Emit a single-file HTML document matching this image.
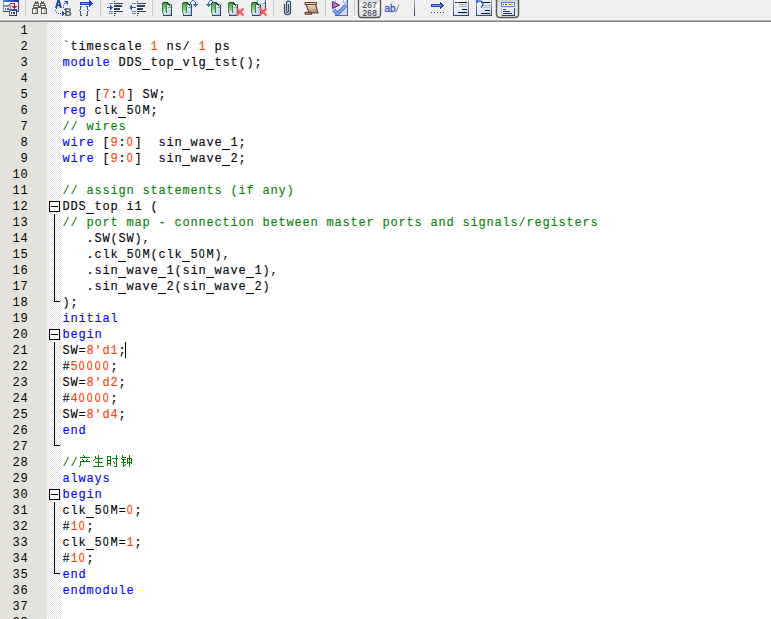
<!DOCTYPE html>
<html><head><meta charset="utf-8">
<style>
html,body{margin:0;padding:0;}
body{width:771px;height:619px;overflow:hidden;background:#fff;position:relative;font-family:"Liberation Mono",monospace;}
#tb{position:absolute;left:0;top:0;width:771px;height:19px;background:#f0f0f0;}
#tbb1{position:absolute;left:0;top:19px;width:771px;height:1px;background:#f4f4f4;}
#tbb2{position:absolute;left:0;top:20px;width:771px;height:1px;background:#b2b4b7;}
#tbb3{position:absolute;left:0;top:21px;width:771px;height:1px;background:#7f858f;}
#gut{position:absolute;left:0;top:22px;width:47px;height:597px;background:#e3e3dc;}
#chk{position:absolute;left:47px;top:22px;width:14px;height:597px;}
#nums{position:absolute;left:0;top:23px;width:28.4px;text-align:right;font-size:12px;letter-spacing:0.8px;line-height:16px;color:#000;white-space:pre;}
#code{position:absolute;left:62.4px;top:23px;font-size:12px;letter-spacing:0.8px;-webkit-text-stroke:0.1px;line-height:16px;color:#000;white-space:pre;margin:0;font-family:"Liberation Mono",monospace;}
.u{display:inline-block;width:8px;height:1px;background:currentColor;position:relative;top:4px;left:-0.4px}.z{display:inline-block;transform:scaleX(0.82)}.k{color:#0000ff}.c{color:#008000}.n{color:#ff4000}
#fold{position:absolute;left:0;top:0;}
</style></head><body>
<div id="tb"></div><svg id="tbsvg" width="771" height="19" shape-rendering="crispEdges" style="position:absolute;left:0;top:0"><defs>
<linearGradient id="gBlue" x1="0" y1="0" x2="1" y2="0"><stop offset="0" stop-color="#4a80e0"/><stop offset="1" stop-color="#1a2a98"/></linearGradient>
<linearGradient id="gWin" x1="0" y1="0" x2="1" y2="1"><stop offset="0" stop-color="#ffffff"/><stop offset="1" stop-color="#d4e2fa"/></linearGradient>
<linearGradient id="gPage" x1="0" y1="0" x2="1" y2="1"><stop offset="0" stop-color="#f4f8ff"/><stop offset="1" stop-color="#b8ccf0"/></linearGradient>
<linearGradient id="gGreen" x1="0" y1="0" x2="0" y2="1"><stop offset="0" stop-color="#4a9a4a"/><stop offset="1" stop-color="#b0ecb0"/></linearGradient>
<linearGradient id="gScroll" x1="0" y1="0" x2="0" y2="1"><stop offset="0" stop-color="#efe4c0"/><stop offset="1" stop-color="#9c8c78"/></linearGradient>
<linearGradient id="gBtn" x1="0" y1="0" x2="0" y2="1"><stop offset="0" stop-color="#d4d4d4"/><stop offset="0.3" stop-color="#f6f6f6"/><stop offset="1" stop-color="#e4e4e4"/></linearGradient>
<linearGradient id="gBtn2" x1="0" y1="0" x2="0" y2="1"><stop offset="0" stop-color="#c8c8c8"/><stop offset="0.25" stop-color="#e6e6e6"/><stop offset="1" stop-color="#ececec"/></linearGradient>
<linearGradient id="gVl" x1="0" y1="0" x2="0" y2="1"><stop offset="0" stop-color="#a8b4c8"/><stop offset="1" stop-color="#2a3a58"/></linearGradient>
<linearGradient id="gDocB" x1="0" y1="0" x2="0" y2="1"><stop offset="0" stop-color="#90a4c0"/><stop offset="1" stop-color="#34486a"/></linearGradient>
<linearGradient id="gDocF" x1="0" y1="0" x2="1" y2="1"><stop offset="0" stop-color="#ffffff"/><stop offset="1" stop-color="#c8d6f6"/></linearGradient>
</defs><rect x="3" y="0" width="16" height="2" fill="url(#gBlue)"/><rect x="3" y="2" width="1" height="10" fill="#8494b4"/><rect x="18" y="2" width="1" height="10" fill="#3a4a6a"/><rect x="3" y="11" width="16" height="1" fill="#3a4a6a"/><rect x="4" y="2" width="14" height="9" fill="url(#gWin)"/><rect x="4" y="5" width="7" height="2" fill="#8c948c"/><rect x="10" y="5" width="1" height="5" fill="#8c948c"/><rect x="5" y="8" width="1" height="2" fill="#606860"/><rect x="7" y="8" width="2" height="2" fill="#606860"/><rect x="9" y="4" width="1" height="1" fill="#d8104a"/><rect x="10" y="3" width="4" height="1" fill="#d8104a"/><rect x="14" y="3" width="1" height="6" fill="#d8104a"/><rect x="12" y="6" width="5" height="1" fill="#d8104a"/><rect x="13" y="7" width="3" height="1" fill="#d8104a"/><rect x="14" y="8" width="1" height="1" fill="#d8104a"/><rect x="9" y="9" width="8" height="2" fill="url(#gBlue)"/><rect x="9" y="11" width="1" height="4" fill="#5a6a8a"/><rect x="16" y="11" width="1" height="4" fill="#304060"/><rect x="9" y="15" width="8" height="1" fill="#304060"/><rect x="10" y="11" width="6" height="4" fill="#fbfcff"/><rect x="11" y="12" width="1" height="2" fill="#203050"/><rect x="13" y="12" width="2" height="2" fill="#203050"/><rect x="25" y="0" width="1" height="16" fill="#cbcbcb"/><rect x="35" y="1" width="3" height="2" fill="#5e5a54"/><rect x="36" y="1" width="1" height="1" fill="#fbfbf8"/><rect x="34" y="3" width="5" height="2" fill="#5e5a54"/><rect x="35" y="4" width="3" height="1" fill="#fbfbf8"/><rect x="33" y="5" width="6" height="3" fill="#5e5a54"/><rect x="34" y="6" width="4" height="1" fill="#fbfbf8"/><rect x="32" y="8" width="6" height="6" fill="#5e5a54"/><rect x="33" y="9" width="4" height="4" fill="#c8c6c0"/><rect x="33" y="9" width="2" height="4" fill="#fbfbf8"/><rect x="41" y="1" width="3" height="2" fill="#5e5a54"/><rect x="42" y="1" width="1" height="1" fill="#fbfbf8"/><rect x="40" y="3" width="5" height="2" fill="#5e5a54"/><rect x="41" y="4" width="3" height="1" fill="#fbfbf8"/><rect x="40" y="5" width="6" height="3" fill="#5e5a54"/><rect x="41" y="6" width="4" height="1" fill="#fbfbf8"/><rect x="41" y="8" width="6" height="6" fill="#5e5a54"/><rect x="42" y="9" width="4" height="4" fill="#c8c6c0"/><rect x="42" y="9" width="2" height="4" fill="#fbfbf8"/><rect x="39" y="6" width="1" height="2" fill="#5e5a54"/><path d="M55 8 L57.3 0 L59.7 0 L62 8 L60 8 L59.5 6.2 L57.5 6.2 L57 8 Z M57.9 4.6 L59.1 4.6 L58.5 2.2 Z" fill="#1848a8" fill-rule="evenodd" shape-rendering="auto"/><rect x="56" y="8" width="1" height="1" fill="#2848c0"/><rect x="55" y="10" width="1" height="1" fill="#2848c0"/><rect x="56" y="12" width="1" height="1" fill="#2848c0"/><rect x="58" y="13" width="1" height="1" fill="#2848c0"/><rect x="60" y="13" width="1" height="1" fill="#2848c0"/><rect x="64" y="9" width="1" height="1" fill="#2848c0"/><rect x="63" y="7" width="1" height="1" fill="#2848c0"/><rect x="63" y="5" width="1" height="1" fill="#2848c0"/><rect x="64" y="3" width="1" height="1" fill="#2848c0"/><rect x="62" y="11" width="1" height="5" fill="#2848c0"/><rect x="63" y="12" width="1" height="3" fill="#2848c0"/><rect x="64" y="13" width="1" height="1" fill="#2848c0"/><path d="M64 1 L68 1 L68 5 Z" fill="#2848c0" shape-rendering="auto"/><path d="M65 8 L69 8 Q71 8 71 10 Q71 11.3 70 11.6 Q71.5 12 71.5 13.5 Q71.5 16 69 16 L65 16 Z M67 9.6 L67 11 L68.6 11 Q69.2 11 69.2 10.3 Q69.2 9.6 68.6 9.6 Z M67 12.4 L67 14.4 L68.8 14.4 Q69.6 14.4 69.6 13.4 Q69.6 12.4 68.8 12.4 Z" fill="#687070" fill-rule="evenodd" shape-rendering="auto"/><rect x="80" y="2" width="10" height="3" fill="#2040c0"/><rect x="81" y="3" width="8" height="1" fill="#7aa0e8"/><rect x="89" y="0" width="1" height="7" fill="#2040c0"/><rect x="90" y="1" width="1" height="5" fill="#2040c0"/><rect x="91" y="2" width="1" height="3" fill="#2040c0"/><rect x="92" y="3" width="1" height="1" fill="#2040c0"/><rect x="80" y="6" width="2" height="1" fill="#48607a"/><rect x="80" y="7" width="1" height="3" fill="#48607a"/><rect x="79" y="10" width="1" height="1" fill="#48607a"/><rect x="80" y="11" width="1" height="4" fill="#48607a"/><rect x="80" y="15" width="2" height="1" fill="#48607a"/><rect x="86" y="6" width="2" height="1" fill="#48607a"/><rect x="87" y="7" width="1" height="3" fill="#48607a"/><rect x="88" y="10" width="1" height="1" fill="#48607a"/><rect x="87" y="11" width="1" height="4" fill="#48607a"/><rect x="86" y="15" width="2" height="1" fill="#48607a"/><rect x="100" y="0" width="1" height="16" fill="#cbcbcb"/><rect x="114" y="1" width="1" height="1" fill="#2a4464"/><rect x="114" y="15" width="1" height="1" fill="#2a4464"/><rect x="109" y="3" width="4" height="1" fill="#7088a8"/><rect x="114" y="3" width="9" height="1" fill="#2a4464"/><rect x="114" y="5" width="8" height="2" fill="#2a4464"/><rect x="114" y="8" width="6" height="2" fill="#2a4464"/><rect x="109" y="11" width="4" height="1" fill="#7088a8"/><rect x="114" y="11" width="9" height="1" fill="#2a4464"/><rect x="109" y="13" width="4" height="1" fill="#7088a8"/><rect x="114" y="13" width="2" height="1" fill="#2a4464"/><rect x="107" y="7" width="6" height="1" fill="#3050d0"/><rect x="110" y="5" width="1" height="5" fill="#3050d0"/><rect x="111" y="6" width="1" height="3" fill="#3050d0"/><rect x="137" y="1" width="1" height="1" fill="#2a4464"/><rect x="137" y="15" width="1" height="1" fill="#2a4464"/><rect x="132" y="3" width="4" height="1" fill="#7088a8"/><rect x="137" y="3" width="9" height="1" fill="#2a4464"/><rect x="137" y="5" width="8" height="2" fill="#2a4464"/><rect x="137" y="8" width="6" height="2" fill="#2a4464"/><rect x="132" y="11" width="4" height="1" fill="#7088a8"/><rect x="137" y="11" width="9" height="1" fill="#2a4464"/><rect x="132" y="13" width="4" height="1" fill="#7088a8"/><rect x="137" y="13" width="2" height="1" fill="#2a4464"/><rect x="130" y="7" width="6" height="1" fill="#3050d0"/><rect x="131" y="5" width="1" height="5" fill="#3050d0"/><rect x="130" y="6" width="1" height="3" fill="#3050d0"/><rect x="152" y="0" width="1" height="16" fill="#cbcbcb"/><rect x="163" y="4" width="9" height="12" fill="#6a80a0"/><rect x="164" y="5" width="7" height="10" fill="url(#gPage)"/><rect x="163" y="15" width="9" height="1" fill="#2a4060"/><rect x="171" y="5" width="1" height="11" fill="#34486a"/><rect x="168" y="5" width="2" height="2" fill="#ffffff"/><rect x="168" y="7" width="3" height="1" fill="#8aa0c0"/><rect x="170" y="6" width="1" height="1" fill="#8aa0c0"/><rect x="162" y="3" width="5" height="10" fill="url(#gGreen)"/><rect x="164" y="11" width="1" height="2" fill="#d8e4f4"/><rect x="163" y="12" width="1" height="1" fill="#d8e4f4"/><rect x="165" y="12" width="1" height="1" fill="#d8e4f4"/><rect x="163" y="2" width="5" height="1" fill="#0e520e"/><rect x="162" y="3" width="1" height="1" fill="#0e520e"/><rect x="167" y="3" width="2" height="1" fill="#0e520e"/><rect x="168" y="4" width="2" height="1" fill="#0e520e"/><rect x="169" y="5" width="1" height="1" fill="#0e520e"/><rect x="162" y="4" width="1" height="9" fill="#3a8a3a"/><rect x="166" y="4" width="1" height="9" fill="#3a823a"/><rect x="183" y="4" width="9" height="12" fill="#6a80a0"/><rect x="184" y="5" width="7" height="10" fill="url(#gPage)"/><rect x="183" y="15" width="9" height="1" fill="#2a4060"/><rect x="191" y="5" width="1" height="11" fill="#34486a"/><rect x="188" y="5" width="2" height="2" fill="#ffffff"/><rect x="188" y="7" width="3" height="1" fill="#8aa0c0"/><rect x="190" y="6" width="1" height="1" fill="#8aa0c0"/><rect x="182" y="3" width="5" height="10" fill="url(#gGreen)"/><rect x="184" y="11" width="1" height="2" fill="#d8e4f4"/><rect x="183" y="12" width="1" height="1" fill="#d8e4f4"/><rect x="185" y="12" width="1" height="1" fill="#d8e4f4"/><rect x="183" y="2" width="5" height="1" fill="#0e520e"/><rect x="182" y="3" width="1" height="1" fill="#0e520e"/><rect x="187" y="3" width="2" height="1" fill="#0e520e"/><rect x="188" y="4" width="2" height="1" fill="#0e520e"/><rect x="189" y="5" width="1" height="1" fill="#0e520e"/><rect x="182" y="4" width="1" height="9" fill="#3a8a3a"/><rect x="186" y="4" width="1" height="9" fill="#3a823a"/><rect x="190" y="2" width="1" height="2" fill="#3a6ad8"/><rect x="191" y="1" width="1" height="1" fill="#3a6ad8"/><rect x="192" y="0" width="2" height="1" fill="#3a6ad8"/><rect x="194" y="1" width="1" height="1" fill="#3a6ad8"/><rect x="195" y="2" width="1" height="4" fill="#3a6ad8"/><rect x="193" y="4" width="5" height="1" fill="#3a6ad8"/><rect x="194" y="5" width="3" height="1" fill="#3a6ad8"/><rect x="195" y="6" width="1" height="1" fill="#3a6ad8"/><rect x="212" y="4" width="9" height="12" fill="#6a80a0"/><rect x="213" y="5" width="7" height="10" fill="url(#gPage)"/><rect x="212" y="15" width="9" height="1" fill="#2a4060"/><rect x="220" y="5" width="1" height="11" fill="#34486a"/><rect x="217" y="5" width="2" height="2" fill="#ffffff"/><rect x="217" y="7" width="3" height="1" fill="#8aa0c0"/><rect x="219" y="6" width="1" height="1" fill="#8aa0c0"/><rect x="211" y="3" width="5" height="10" fill="url(#gGreen)"/><rect x="213" y="11" width="1" height="2" fill="#d8e4f4"/><rect x="212" y="12" width="1" height="1" fill="#d8e4f4"/><rect x="214" y="12" width="1" height="1" fill="#d8e4f4"/><rect x="212" y="2" width="5" height="1" fill="#0e520e"/><rect x="211" y="3" width="1" height="1" fill="#0e520e"/><rect x="216" y="3" width="2" height="1" fill="#0e520e"/><rect x="217" y="4" width="2" height="1" fill="#0e520e"/><rect x="218" y="5" width="1" height="1" fill="#0e520e"/><rect x="211" y="4" width="1" height="9" fill="#3a8a3a"/><rect x="215" y="4" width="1" height="9" fill="#3a823a"/><rect x="213" y="2" width="1" height="2" fill="#3a6ad8"/><rect x="212" y="1" width="1" height="1" fill="#3a6ad8"/><rect x="210" y="0" width="2" height="1" fill="#3a6ad8"/><rect x="209" y="1" width="1" height="1" fill="#3a6ad8"/><rect x="208" y="2" width="1" height="4" fill="#3a6ad8"/><rect x="206" y="4" width="5" height="1" fill="#3a6ad8"/><rect x="207" y="5" width="3" height="1" fill="#3a6ad8"/><rect x="208" y="6" width="1" height="1" fill="#3a6ad8"/><rect x="229" y="4" width="9" height="12" fill="#6a80a0"/><rect x="230" y="5" width="7" height="10" fill="url(#gPage)"/><rect x="229" y="15" width="9" height="1" fill="#2a4060"/><rect x="237" y="5" width="1" height="11" fill="#34486a"/><rect x="234" y="5" width="2" height="2" fill="#ffffff"/><rect x="234" y="7" width="3" height="1" fill="#8aa0c0"/><rect x="236" y="6" width="1" height="1" fill="#8aa0c0"/><rect x="228" y="3" width="5" height="10" fill="url(#gGreen)"/><rect x="230" y="11" width="1" height="2" fill="#d8e4f4"/><rect x="229" y="12" width="1" height="1" fill="#d8e4f4"/><rect x="231" y="12" width="1" height="1" fill="#d8e4f4"/><rect x="229" y="2" width="5" height="1" fill="#0e520e"/><rect x="228" y="3" width="1" height="1" fill="#0e520e"/><rect x="233" y="3" width="2" height="1" fill="#0e520e"/><rect x="234" y="4" width="2" height="1" fill="#0e520e"/><rect x="235" y="5" width="1" height="1" fill="#0e520e"/><rect x="228" y="4" width="1" height="9" fill="#3a8a3a"/><rect x="232" y="4" width="1" height="9" fill="#3a823a"/><path d="M236.5 8.5 L243.5 15.5 M243.5 8.5 L236.5 15.5" stroke="#ff5858" stroke-width="2.3" shape-rendering="auto"/><rect x="257" y="0" width="9" height="11" fill="#7a90b0"/><rect x="258" y="0" width="7" height="10" fill="url(#gPage)"/><rect x="265" y="2" width="1" height="9" fill="#3a5070"/><rect x="262" y="1" width="2" height="2" fill="#ffffff"/><rect x="262" y="3" width="3" height="1" fill="#8aa0c0"/><rect x="264" y="2" width="1" height="1" fill="#8aa0c0"/><rect x="252" y="4" width="9" height="12" fill="#6a80a0"/><rect x="253" y="5" width="7" height="10" fill="url(#gPage)"/><rect x="252" y="15" width="9" height="1" fill="#2a4060"/><rect x="260" y="5" width="1" height="11" fill="#34486a"/><rect x="257" y="5" width="2" height="2" fill="#ffffff"/><rect x="257" y="7" width="3" height="1" fill="#8aa0c0"/><rect x="259" y="6" width="1" height="1" fill="#8aa0c0"/><rect x="251" y="3" width="5" height="10" fill="url(#gGreen)"/><rect x="253" y="11" width="1" height="2" fill="#d8e4f4"/><rect x="252" y="12" width="1" height="1" fill="#d8e4f4"/><rect x="254" y="12" width="1" height="1" fill="#d8e4f4"/><rect x="252" y="2" width="5" height="1" fill="#0e520e"/><rect x="251" y="3" width="1" height="1" fill="#0e520e"/><rect x="256" y="3" width="2" height="1" fill="#0e520e"/><rect x="257" y="4" width="2" height="1" fill="#0e520e"/><rect x="258" y="5" width="1" height="1" fill="#0e520e"/><rect x="251" y="4" width="1" height="9" fill="#3a8a3a"/><rect x="255" y="4" width="1" height="9" fill="#3a823a"/><path d="M259.5 8.5 L266.5 15.5 M266.5 8.5 L259.5 15.5" stroke="#ff5858" stroke-width="2.3" shape-rendering="auto"/><rect x="273" y="0" width="1" height="16" fill="#cbcbcb"/><path d="M288.5 4 L288.5 11 Q288.5 12.5 287.5 12.5 Q286.5 12.5 286.5 11 L286.5 3 Q286.5 1 288.5 1 Q290.5 1 290.5 3 L290.5 12 Q290.5 14.5 287.5 14.5 Q284.5 14.5 284.5 12 L284.5 4" fill="none" stroke="#2a4a72" stroke-width="1.25" shape-rendering="auto"/><path d="M306 4 L315.5 4 L318 13 L309 13 Z" fill="url(#gScroll)" stroke="#6e3828" stroke-width="1.1" shape-rendering="auto"/><path d="M305.5 2.5 L316 2.5 Q317.2 3.3 316 4.5 L305.5 4.5 Q304.3 3.5 305.5 2.5 Z" fill="#e8dcb8" stroke="#6e3828" stroke-width="1.1" shape-rendering="auto"/><path d="M305.5 12.2 L311 12.2 L311.5 14.3 L305.5 14.3 Q304.2 13.2 305.5 12.2 Z" fill="#b0a088" stroke="#6e3828" stroke-width="1.1" shape-rendering="auto"/><rect x="325" y="0" width="1" height="16" fill="#cbcbcb"/><rect x="335" y="0" width="13" height="16" fill="#5a6a84"/><rect x="336" y="0" width="11" height="15" fill="url(#gDocF)"/><rect x="343" y="0" width="4" height="3" fill="#a8b8d0"/><rect x="344" y="0" width="2" height="2" fill="#ffffff"/><rect x="335" y="0" width="1" height="15" fill="#b8c4d8"/><path d="M332.5 1.5 L339.5 5 L332.5 8.5 Z" fill="#c868d8" stroke="#403860" stroke-width="1" shape-rendering="auto"/><path d="M333.5 10 L337.5 13.8 L346.5 5" fill="none" stroke="#3a66c8" stroke-width="3.6" shape-rendering="auto"/><path d="M333.5 10 L337.5 13.8 L346.5 5" fill="none" stroke="#86aef2" stroke-width="1.8" shape-rendering="auto"/><rect x="354" y="0" width="1" height="16" fill="#cbcbcb"/><path d="M358.5 -1 L358.5 14.5 Q358.5 17.5 361.5 17.5 L377.5 17.5 Q380.5 17.5 380.5 14.5 L380.5 -1" fill="url(#gBtn)" stroke="#555" stroke-width="1.3" shape-rendering="auto"/><text x="369.8" y="7.8" font-family="Liberation Sans" font-size="8.2" fill="#1a3050" stroke="#1a3050" stroke-width="0.05" text-anchor="middle" letter-spacing="0.3" shape-rendering="auto">267</text><text x="369.8" y="15.6" font-family="Liberation Sans" font-size="8.2" fill="#1a3050" stroke="#1a3050" stroke-width="0.05" text-anchor="middle" letter-spacing="0.3" shape-rendering="auto">268</text><text x="384.6" y="11.8" font-family="Liberation Sans" font-size="10" fill="#3050c0" stroke="#3050c0" stroke-width="0.3" letter-spacing="-0.2" shape-rendering="auto">ab</text><path d="M399 4.5 L395.8 12.5" stroke="#8894a8" stroke-width="1.1" shape-rendering="auto"/><rect x="414" y="0" width="1" height="16" fill="url(#gVl)"/><rect x="431" y="4" width="10" height="3" fill="#2040c0"/><rect x="432" y="5" width="8" height="1" fill="#7aa0e8"/><rect x="440" y="2" width="1" height="7" fill="#2040c0"/><rect x="441" y="3" width="1" height="5" fill="#2040c0"/><rect x="442" y="4" width="1" height="3" fill="#2040c0"/><rect x="443" y="5" width="1" height="1" fill="#2040c0"/><rect x="440" y="5" width="2" height="1" fill="#7aa0e8"/><rect x="431" y="12" width="1" height="1" fill="#304050"/><rect x="434" y="12" width="1" height="1" fill="#304050"/><rect x="437" y="12" width="1" height="1" fill="#304050"/><rect x="440" y="12" width="1" height="1" fill="#304050"/><rect x="443" y="12" width="1" height="1" fill="#304050"/><rect x="453" y="0" width="16" height="16" fill="url(#gDocB)"/><rect x="454" y="0" width="14" height="15" fill="url(#gDocF)"/><rect x="455" y="2" width="2" height="1" fill="#101010"/><rect x="458" y="2" width="9" height="1" fill="#101010"/><rect x="459" y="4" width="8" height="1" fill="#b4b8b0"/><rect x="459" y="6" width="8" height="1" fill="#b4b8b0"/><rect x="462" y="9" width="5" height="1" fill="#101010"/><rect x="458" y="12" width="9" height="1" fill="#101010"/><rect x="476" y="0" width="16" height="16" fill="url(#gDocB)"/><rect x="477" y="0" width="14" height="15" fill="url(#gDocF)"/><rect x="481" y="2" width="9" height="1" fill="#101010"/><rect x="483" y="5" width="7" height="1" fill="#b4b8b0"/><rect x="483" y="7" width="7" height="1" fill="#b4b8b0"/><rect x="485" y="10" width="5" height="1" fill="#101010"/><rect x="481" y="13" width="9" height="1" fill="#101010"/><path d="M477 1.5 Q483 0 483 4 Q483 6 481 7.5" fill="none" stroke="#3a6ad8" stroke-width="1.6" shape-rendering="auto"/><rect x="476" y="0" width="2" height="3" fill="#3a6ad8"/><path d="M496.5 -1 L496.5 14 Q496.5 17.5 500 17.5 L515 17.5 Q518.5 17.5 518.5 14 L518.5 -1" fill="url(#gBtn2)" stroke="#5a5a5a" stroke-width="1.5" shape-rendering="auto"/><rect x="501" y="2" width="14" height="5" fill="#4a80d8"/><rect x="502" y="3" width="12" height="3" fill="#ffffff"/><rect x="503" y="4" width="1" height="1" fill="#203858"/><rect x="505" y="4" width="2" height="1" fill="#203858"/><rect x="508" y="4" width="5" height="1" fill="#e88a10"/><rect x="501" y="8" width="14" height="8" fill="url(#gDocF)"/><rect x="514" y="8" width="1" height="8" fill="#304060"/><rect x="501" y="15" width="14" height="1" fill="#304060"/><rect x="501" y="8" width="1" height="8" fill="#a8b8d8"/><rect x="503" y="9" width="3" height="1" fill="#203858"/><rect x="503" y="11" width="7" height="1" fill="#203858"/><rect x="503" y="13" width="9" height="1" fill="#203858"/></svg><div id="tbb1"></div><div id="tbb2"></div><div id="tbb3"></div>
<div id="gut"></div><div style="position:absolute;left:46px;top:22px;width:1px;height:597px;background:#e6e5da"></div>
<svg id="chk" width="14" height="597" shape-rendering="crispEdges"><defs><pattern id="p" width="2" height="2" patternUnits="userSpaceOnUse"><rect width="2" height="2" fill="#fff"/><rect x="1" y="0" width="1" height="1" fill="#e2e2e2"/><rect x="0" y="1" width="1" height="1" fill="#e2e2e2"/></pattern></defs><rect width="14" height="597" fill="url(#p)"/></svg>
<div id="nums">1
2
3
4
5
6
7
8
9
10
11
12
13
14
15
16
17
18
19
20
21
22
23
24
25
26
27
28
29
30
31
32
33
34
35
36
37
38</div>
<pre id="code">

`timescale <span class="n">1</span> ns/ <span class="n">1</span> ps
<span class="k">module</span> DDS<span class="u"></span>top<span class="u"></span>vlg<span class="u"></span>tst();

<span class="k">reg</span> [<span class="n">7</span>:<span class="n"><span class="z">O</span></span>] SW;
<span class="k">reg</span> clk<span class="u"></span>5<span class="z">O</span>M;
<span class="c">// wires</span>
<span class="k">wire</span> [<span class="n">9</span>:<span class="n"><span class="z">O</span></span>]  sin<span class="u"></span>wave<span class="u"></span>1;
<span class="k">wire</span> [<span class="n">9</span>:<span class="n"><span class="z">O</span></span>]  sin<span class="u"></span>wave<span class="u"></span>2;

<span class="c">// assign statements (if any)</span>
DDS<span class="u"></span>top i1 (
<span class="c">// port map - connection between master ports and signals/registers</span>
   .SW(SW),
   .clk<span class="u"></span>5<span class="z">O</span>M(clk<span class="u"></span>5<span class="z">O</span>M),
   .sin<span class="u"></span>wave<span class="u"></span>1(sin<span class="u"></span>wave<span class="u"></span>1),
   .sin<span class="u"></span>wave<span class="u"></span>2(sin<span class="u"></span>wave<span class="u"></span>2)
);
<span class="k">initial</span>
<span class="k">begin</span>
SW=<span class="n">8'd1</span>;
#<span class="n">5<span class="z">O</span><span class="z">O</span><span class="z">O</span><span class="z">O</span></span>;
SW=<span class="n">8'd2</span>;
#<span class="n">4<span class="z">O</span><span class="z">O</span><span class="z">O</span><span class="z">O</span></span>;
SW=<span class="n">8'd4</span>;
<span class="k">end</span>

<span class="c">//</span>
<span class="k">always</span>
<span class="k">begin</span>
clk<span class="u"></span>5<span class="z">O</span>M=<span class="n"><span class="z">O</span></span>;
#<span class="n">1<span class="z">O</span></span>;
clk<span class="u"></span>5<span class="z">O</span>M=<span class="n">1</span>;
#<span class="n">1<span class="z">O</span></span>;
<span class="k">end</span>
<span class="k">endmodule</span>
</pre>
<svg id="fold" width="771" height="619" shape-rendering="crispEdges">
<g fill="#fff"><rect x="50" y="202" width="9" height="9"/><rect x="50" y="330" width="9" height="9"/><rect x="50" y="490" width="9" height="9"/></g>
<g fill="#000">
<!-- fold 12 -->
<rect x="49" y="201" width="11" height="1"/><rect x="49" y="211" width="11" height="1"/><rect x="49" y="201" width="1" height="11"/><rect x="59" y="201" width="1" height="11"/><rect x="51" y="206" width="7" height="1"/>
<rect x="54" y="214" width="1" height="88"/><rect x="54" y="301" width="6" height="1"/>
<!-- fold 20 -->
<rect x="49" y="329" width="11" height="1"/><rect x="49" y="339" width="11" height="1"/><rect x="49" y="329" width="1" height="11"/><rect x="59" y="329" width="1" height="11"/><rect x="51" y="334" width="7" height="1"/>
<rect x="54" y="342" width="1" height="104"/><rect x="54" y="445" width="6" height="1"/>
<!-- fold 30 -->
<rect x="49" y="489" width="11" height="1"/><rect x="49" y="499" width="11" height="1"/><rect x="49" y="489" width="1" height="11"/><rect x="59" y="489" width="1" height="11"/><rect x="51" y="494" width="7" height="1"/>
<rect x="54" y="502" width="1" height="72"/><rect x="54" y="573" width="6" height="1"/>
</g>
<g fill="#008000"><rect x="83" y="455" width="1" height="1"/><rect x="84" y="456" width="1" height="1"/><rect x="80" y="457" width="10" height="1"/><rect x="82" y="459" width="1" height="1"/><rect x="83" y="460" width="1" height="1"/><rect x="87" y="459" width="1" height="1"/><rect x="86" y="460" width="1" height="1"/><rect x="80" y="461" width="10" height="1"/><rect x="80" y="461" width="1" height="5"/><rect x="79" y="466" width="1" height="1"/><rect x="95" y="456" width="1" height="3"/><rect x="94" y="459" width="1" height="1"/><rect x="93" y="460" width="1" height="1"/><rect x="95" y="458" width="8" height="1"/><rect x="98" y="455" width="1" height="12"/><rect x="95" y="462" width="7" height="1"/><rect x="93" y="466" width="11" height="1"/><rect x="107" y="456" width="1" height="10"/><rect x="110" y="456" width="1" height="10"/><rect x="107" y="456" width="4" height="1"/><rect x="107" y="460" width="4" height="1"/><rect x="107" y="463" width="4" height="1"/><rect x="112" y="458" width="6" height="1"/><rect x="116" y="455" width="1" height="12"/><rect x="114" y="466" width="2" height="1"/><rect x="113" y="461" width="1" height="1"/><rect x="114" y="462" width="1" height="2"/><rect x="122" y="455" width="1" height="2"/><rect x="122" y="457" width="4" height="1"/><rect x="121" y="458" width="1" height="1"/><rect x="122" y="459" width="4" height="1"/><rect x="123" y="459" width="1" height="8"/><rect x="121" y="462" width="5" height="1"/><rect x="125" y="464" width="1" height="1"/><rect x="124" y="465" width="1" height="1"/><rect x="127" y="458" width="1" height="6"/><rect x="131" y="458" width="1" height="6"/><rect x="127" y="458" width="5" height="1"/><rect x="127" y="462" width="5" height="1"/><rect x="129" y="455" width="1" height="12"/></g>
<rect x="125" y="342" width="1" height="16" fill="#000"/>
</svg>
</body></html>
